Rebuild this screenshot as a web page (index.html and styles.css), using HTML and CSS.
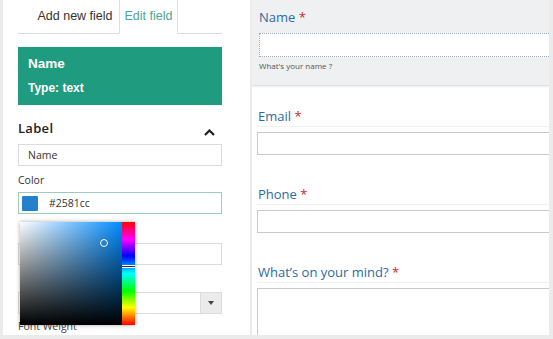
FILE: index.html
```html
<!DOCTYPE html>
<html>
<head>
<meta charset="utf-8">
<link rel="stylesheet" href="styles.css">
</head>
<body>
<div class="frame">
  <aside class="left">
    <div class="tabs">
      <div class="tab">Add new field</div>
      <div class="tab active">Edit field</div>
      <div class="tab-rest"></div>
    </div>
    <div class="summary">
      <div class="summary-name">Name</div>
      <div class="summary-type">Type: text</div>
    </div>
    <div class="section-head">
      <span class="section-title">Label</span>
      <svg class="chev" width="11" height="7" viewBox="0 0 11 7"><path d="M1 6 L5.5 1.5 L10 6" fill="none" stroke="#222" stroke-width="2.2"/></svg>
    </div>
    <div class="box text-in">Name</div>
    <div class="small-label">Color</div>
    <div class="box color-in"><span class="swatch"></span><span>#2581cc</span></div>
    <div class="box plain-in"></div>
    <div class="box select-in"><span class="sel-btn"><svg width="6" height="4" viewBox="0 0 6 4"><path d="M0 0 H6 L3 4 Z" fill="#444"/></svg></span></div>
    <div class="small-label fw">Font Weight</div>
    <div class="picker">
      <div class="sat"><span class="dot"></span></div>
      <div class="hue"><span class="hue-mark"></span></div>
    </div>
  </aside>
  <main class="right">
    <div class="card">
      <div class="f-label">Name <span class="req">*</span></div>
      <div class="dotted"></div>
      <div class="hint">What's your name ?</div>
    </div>
    <div class="field">
      <div class="f-label ruled">Email <span class="req">*</span></div>
      <div class="f-input"></div>
    </div>
    <div class="field">
      <div class="f-label ruled">Phone <span class="req">*</span></div>
      <div class="f-input"></div>
    </div>
    <div class="field">
      <div class="f-label ruled">What’s on your mind? <span class="req">*</span></div>
      <div class="f-input area"></div>
    </div>
  </main>
</div>
</body>
</html>
```
FILE: styles.css
```css
* { box-sizing: border-box; }
html, body { margin: 0; padding: 0; }
body {
  width: 553px;
  height: 339px;
  background: #ebebeb;
  overflow: hidden;
  font-family: "Open Sans", "Noto Sans", sans-serif;
}
.frame {
  display: flex;
  gap: 2px;
  padding-left: 3px;
  padding-right: 4px;
  height: 335px;
}
.left {
  position: relative;
  width: 247px;
  background: #fff;
  padding: 0 28px 0 15px;
  overflow: hidden;
}
.tabs {
  display: flex;
  height: 34px;
}
.tab {
  font-family: "Liberation Sans", Arial, sans-serif;
  font-size: 12.5px;
  color: #333;
  line-height: 33px;
  border-bottom: 1px solid #ddd;
  width: 101px;
  text-align: center;
  padding-left: 13px;
}
.tab.active {
  width: 59px;
  padding-left: 0;
  color: #47a894;
  border-left: 1px solid #ddd;
  border-right: 1px solid #ddd;
  border-bottom: 1px solid #fff;
}
.tab-rest {
  flex: 1;
  border-bottom: 1px solid #ddd;
}
.summary {
  margin-top: 13px;
  height: 58px;
  background: #1f9b7f;
  color: #fff;
  font-family: "Liberation Sans", Arial, sans-serif;
  font-weight: bold;
  padding: 9px 10px 0;
}
.summary-name { font-size: 13.5px; line-height: 16px; }
.summary-type { font-size: 12px; line-height: 16px; margin-top: 8px; }
.section-head {
  display: flex;
  justify-content: space-between;
  align-items: center;
  margin-top: 14px;
  height: 18px;
}
.section-title {
  font-size: 13px;
  font-weight: 600;
  color: #222;
  letter-spacing: 0.3px;
}
.chev { margin-right: 7px; margin-top: 8px; }
.box {
  height: 22px;
  border: 1px solid #dcdcdc;
  font-size: 10.5px;
  color: #333;
  display: flex;
  align-items: center;
}
.text-in { margin-top: 7px; padding-left: 9px; }
.small-label {
  font-size: 10.5px;
  color: #333;
  line-height: 14px;
  margin-top: 7px;
  margin-bottom: 5px;
}
.color-in {
  border-color: #9dcac1;
  padding-left: 3px;
  gap: 11px;
}
.swatch {
  width: 16px;
  height: 15px;
  background: #2581cc;
  border-radius: 1px;
}
.plain-in { margin-top: 29px; }
.select-in {
  justify-content: flex-end;
  margin-top: 27px;
}
.sel-btn {
  width: 22px;
  height: 22px;
  margin: -1px -1px -1px 0;
  background: #ebebeb;
  border: 1px solid #dcdcdc;
  display: flex;
  align-items: center;
  justify-content: center;
}
.fw { margin-top: 5px; color: #444; }
.picker {
  position: absolute;
  left: 17px;
  top: 222px;
  width: 115px;
  height: 103px;
  display: flex;
  box-shadow: 0 0 4px rgba(0,0,0,0.35);
  background: #fff;
}
.sat {
  position: relative;
  width: 102px;
  height: 103px;
  background:
    linear-gradient(to top, #000, rgba(0,0,0,0)),
    linear-gradient(to right, #fff, hsl(207, 100%, 50%));
}
.dot {
  position: absolute;
  left: 80px;
  top: 17px;
  width: 8px;
  height: 8px;
  border: 1.5px solid #fff;
  border-radius: 50%;
  box-shadow: 0 0 1px rgba(0,0,0,0.5);
}
.hue {
  position: relative;
  width: 13px;
  height: 103px;
  background: linear-gradient(to bottom, #f00 0%, #f0f 17%, #00f 33%, #0ff 50%, #0f0 67%, #ff0 83%, #f00 100%);
}
.hue-mark {
  position: absolute;
  left: 0;
  right: 0;
  top: 43px;
  height: 3px;
  border-top: 1px solid #fff;
  border-bottom: 1px solid #fff;
  background: #333;
}
.right {
  width: 297px;
  background: #fff;
  overflow: hidden;
}
.card {
  height: 86px;
  background: #eef0f2;
  border-bottom: 1px solid #dfe2e5;
  box-shadow: 0 1px 2px rgba(0,0,0,0.08);
  padding: 8px 0 0 7px;
}
.f-label {
  font-size: 13px;
  line-height: 18px;
  color: #2c6aa3;
}
.req { color: #d3242f; }
.dotted {
  margin-top: 7px;
  height: 24px;
  width: 300px;
  background: #fff;
  border: 1.5px dotted #9aa9b8;
}
.hint {
  font-size: 8px;
  color: #555;
  margin-top: 3px;
  line-height: 12px;
}
.field { padding-left: 5px; margin-top: 30px; }
.card + .field { margin-top: 21px; }
.ruled {
  padding-left: 1px;
  padding-bottom: 1px;
  border-bottom: 1px solid #f1f1f1;
}
.f-input {
  margin-top: 5px;
  height: 23px;
  width: 300px;
  border: 1px solid #c9c9c9;
}
.f-input.area { height: 80px; }
```
